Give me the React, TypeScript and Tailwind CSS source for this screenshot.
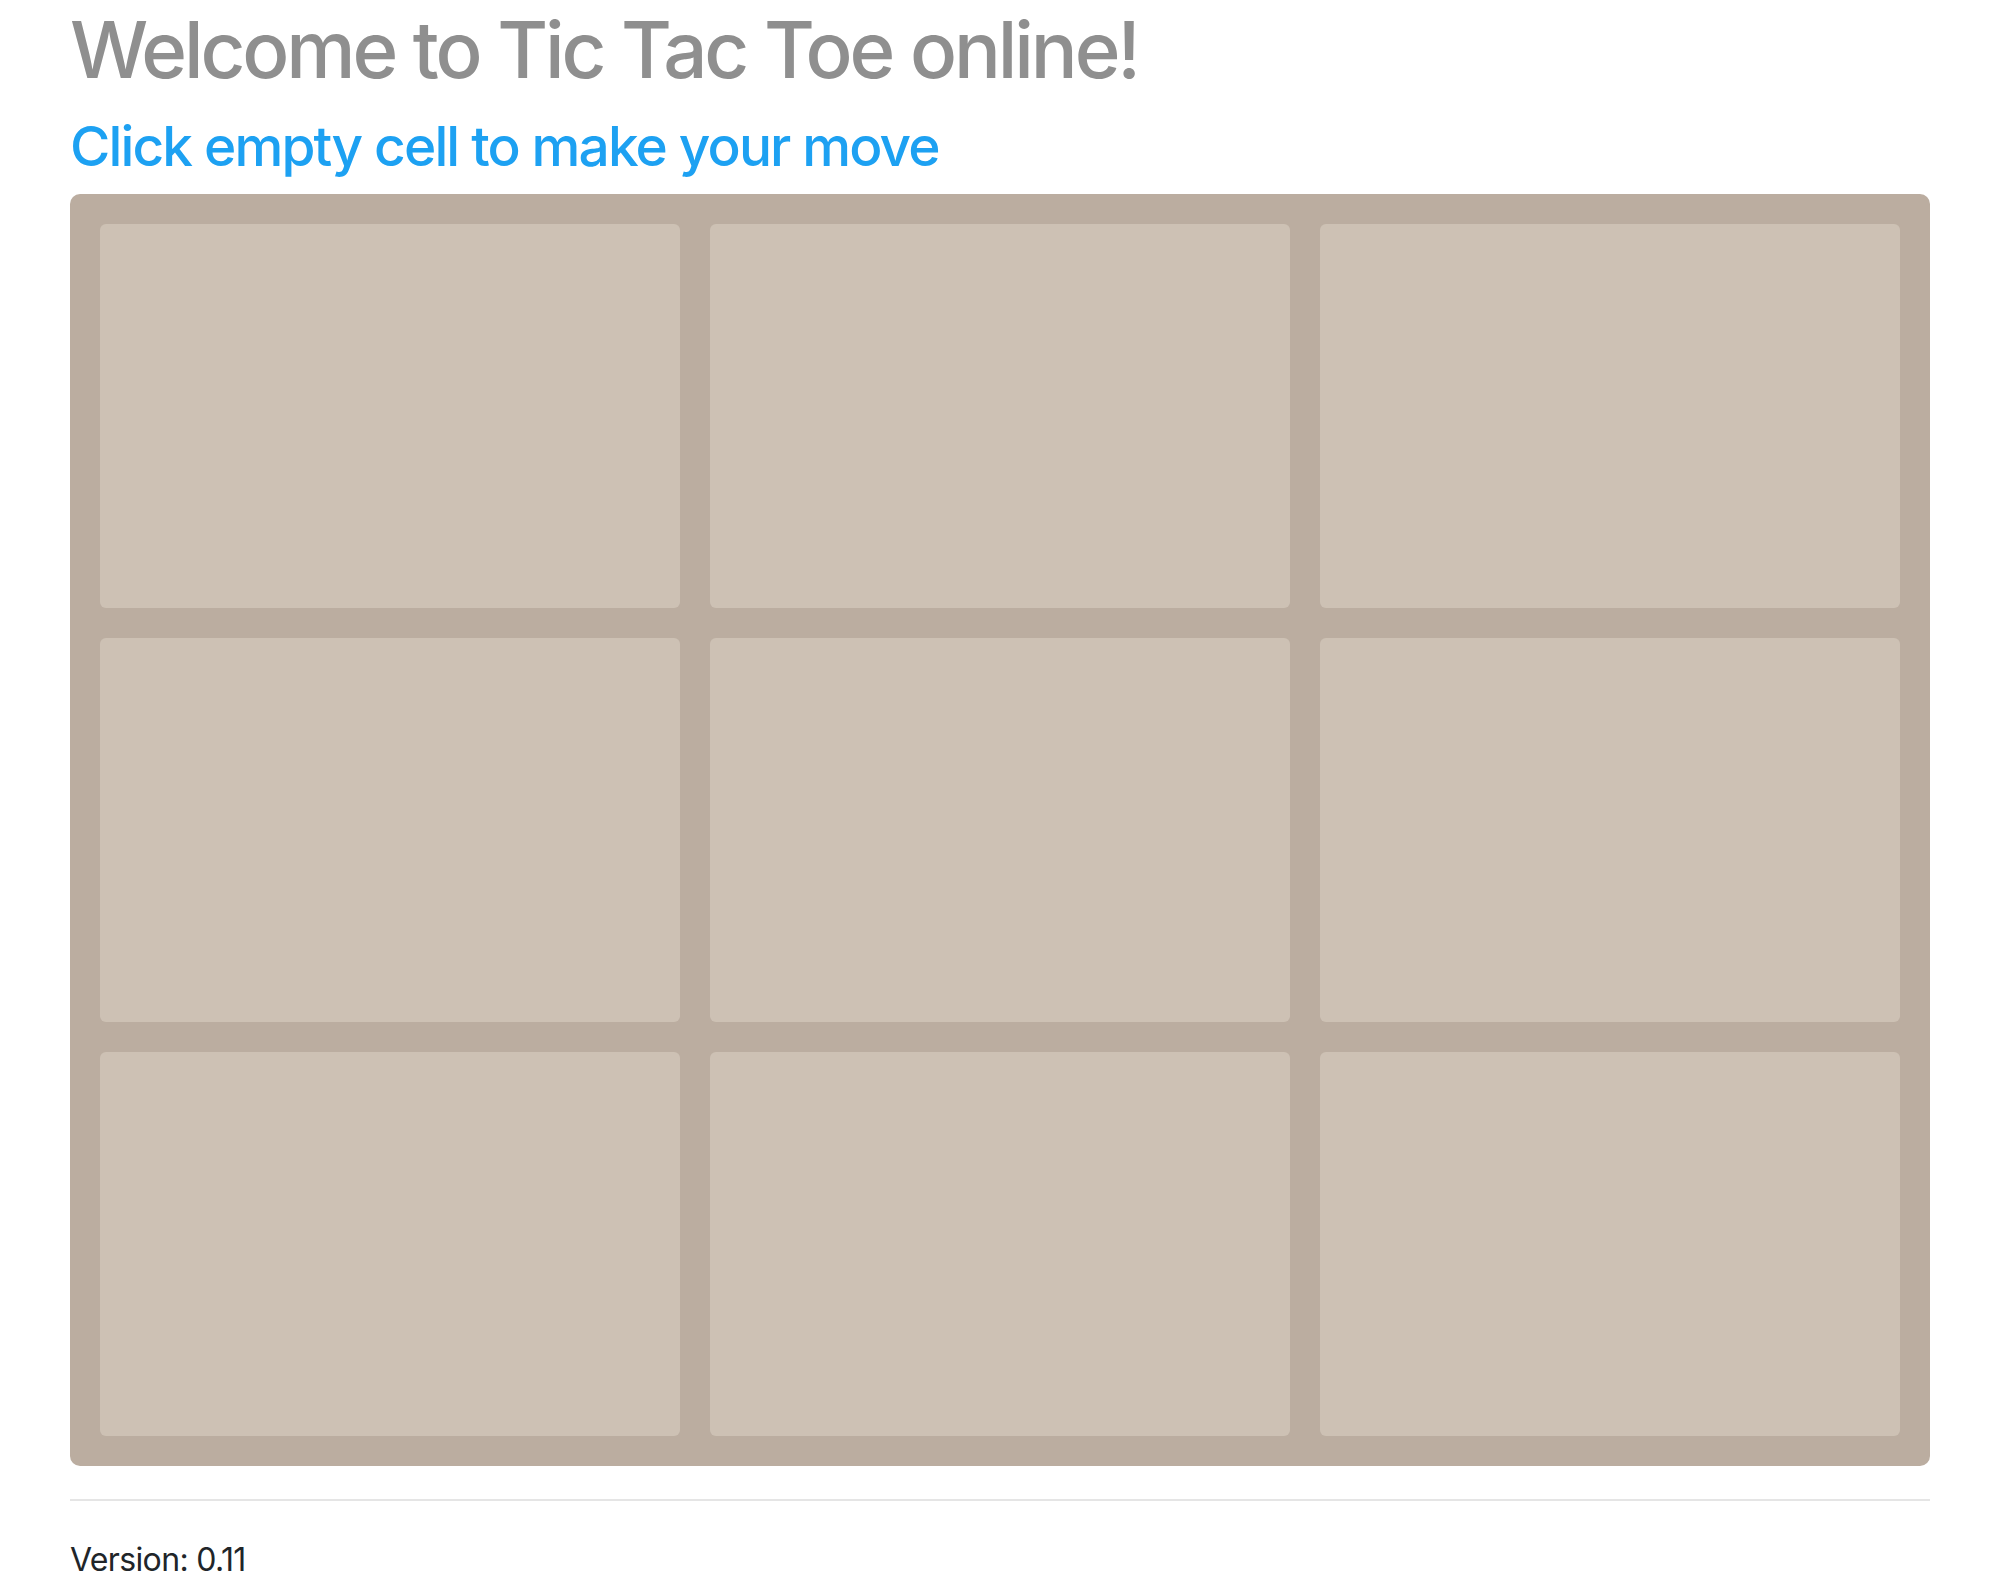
import React from "react";

export default function App() {
  const cells = Array.from({ length: 9 });
  return (
    <div className="min-h-[1580px] bg-white px-[70px] pt-[3px] font-['Inter','Liberation_Sans',sans-serif]">
      <h1 className="text-[78px] font-medium leading-[1.2] text-[#8f8f8f] tracking-[-0.04em]">
        Welcome to Tic Tac Toe online!
      </h1>
      <h3 className="mt-[16px] text-[55px] font-medium leading-[1.2] text-[#1da1f2] tracking-[-0.034em]">
        Click empty cell to make your move
      </h3>
      <div className="mt-[15px] grid grid-cols-3 gap-[30px] rounded-[10px] bg-[#bbada0] p-[30px]">
        {cells.map((_, i) => (
          <div key={i} className="h-[384px] rounded-[6px] bg-[#cdc1b4]" />
        ))}
      </div>
      <hr className="mt-[33px] border-t-2 border-[#e5e5e5]" />
      <p className="mt-[35px] text-[32px] text-[#212529] tracking-[-0.02em]">Version: 0.11</p>
    </div>
  );
}
